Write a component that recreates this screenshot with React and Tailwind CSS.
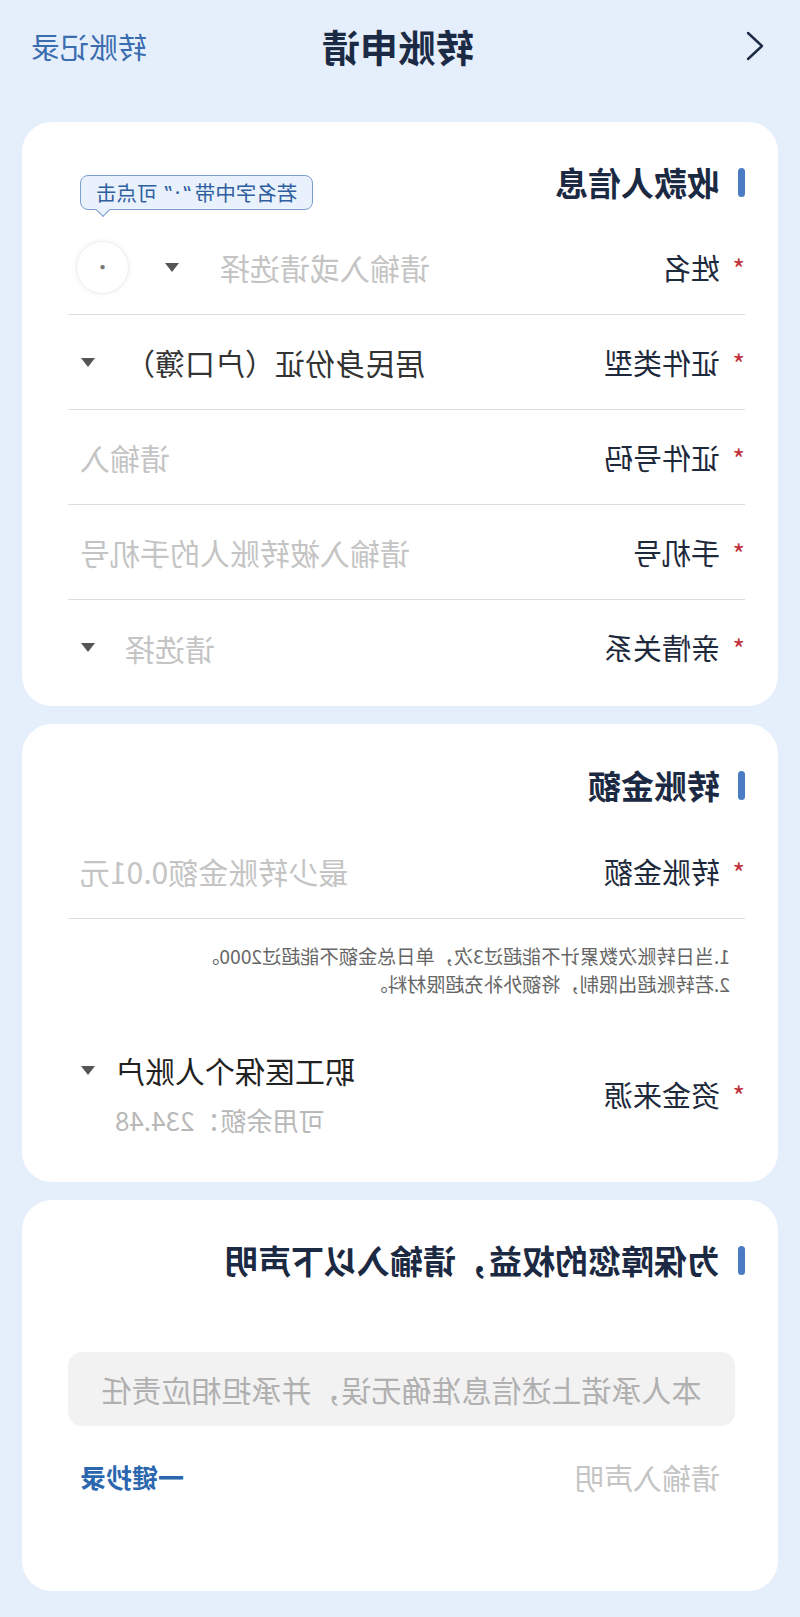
import React from 'react';

// The reference screenshot is horizontally mirrored, so the page is built
// normally and flipped as a whole with -scale-x-100.

function Caret() {
  return (
    <svg width="14" height="9" viewBox="0 0 14 9" className="block">
      <path d="M0 0h14L7 9z" fill="#555" />
    </svg>
  );
}

function SectionTitle({ children }) {
  return (
    <div className="flex h-[40px] items-center">
      <span className="h-[29px] w-[7px] rounded-full bg-[#4a7cc4]" />
      <h2 className="ml-[18px] text-[33px] font-bold leading-none text-[#1b2a42]">{children}</h2>
    </div>
  );
}

function Label({ children }) {
  return (
    <div className="flex items-start">
      <span className="mt-[2px] w-[25px] text-[27px] leading-none text-[#c0313a]">*</span>
      <span className="text-[29px] leading-none text-[#1e2a3b]">{children}</span>
    </div>
  );
}

function Row({ label, children, last }) {
  return (
    <div className={last ? 'flex h-[95px] items-center' : 'flex h-[95px] items-center border-b border-[#dedede]'}>
      <Label>{label}</Label>
      <div className="ml-auto flex items-center">{children}</div>
    </div>
  );
}

export default function App() {
  return (
    <div className="-scale-x-100 min-h-[1617px] bg-[#e5eefb] pb-[30px] font-['Noto_Sans_CJK_SC','Noto_Sans',sans-serif]">
      {/* Header */}
      <header className="grid h-[92px] grid-cols-[1fr_auto_1fr] items-center pl-[35px] pr-[31px]">
        <svg width="20" height="30" viewBox="0 0 20 30" className="block">
          <path d="M17 2L3 15l14 13" fill="none" stroke="#1c2b45" strokeWidth="2.4" strokeLinecap="round" strokeLinejoin="round" />
        </svg>
        <h1 className="text-[38px] font-bold leading-none text-[#1c2b45]">转账申请</h1>
        <span className="justify-self-end text-[29px] leading-none text-[#3a6cb0]">转账记录</span>
      </header>

      <div className="mt-[30px] flex flex-col gap-[18px]">
        {/* 收款人信息 */}
        <section className="mx-[22px] rounded-[30px] bg-white pb-[11px] pl-[33px] pr-[46px] pt-[40px]">
          <SectionTitle>收款人信息</SectionTitle>
          <div className="mt-[18px]">
            <Row label="姓名">
              <span className="text-[30px] leading-none text-[#c4c4c4]">请输入或请选择</span>
              <span className="ml-[41px]"><Caret /></span>
              <div className="relative ml-[36px] mr-[8px]">
                <div className="flex h-[53px] w-[53px] items-center justify-center rounded-full border border-[#eeeeee] bg-white text-[20px] text-[#777] shadow-[0_0_6px_rgba(0,0,0,0.06)]">·</div>
                <div className="absolute bottom-[84px] right-[4px] flex items-center whitespace-nowrap rounded-[8px] border-[1.5px] border-[#7c9fcf] bg-[#e9f1fc] px-[15px] py-[4px] text-[20.5px] leading-[25px] text-[#2f5fa0]">
                  若名字中带<span className="px-[4px] font-['Noto_Sans'] tracking-[3px]">“·”</span>可点击
                  <span className="absolute -bottom-[6px] right-[17px] h-[10px] w-[10px] rotate-45 border-b-[1.5px] border-r-[1.5px] border-[#7c9fcf] bg-[#e9f1fc]" />
                </div>
              </div>
            </Row>
            <Row label="证件类型">
              <span className="text-[30px] leading-none text-[#333]">居民身份证（户口簿）</span>
              <span className="ml-[30px] mr-[13px]"><Caret /></span>
            </Row>
            <Row label="证件号码">
              <span className="mr-[12px] text-[30px] leading-none text-[#c4c4c4]">请输入</span>
            </Row>
            <Row label="手机号">
              <span className="mr-[12px] text-[30px] leading-none text-[#c4c4c4]">请输入被转账人的手机号</span>
            </Row>
            <Row label="亲情关系" last>
              <span className="text-[30px] leading-none text-[#c4c4c4]">请选择</span>
              <span className="ml-[30px] mr-[13px]"><Caret /></span>
            </Row>
          </div>
        </section>

        {/* 转账金额 */}
        <section className="mx-[22px] rounded-[30px] bg-white pb-[44px] pl-[33px] pr-[46px] pt-[41px]">
          <SectionTitle>转账金额</SectionTitle>
          <div className="mt-[19px]">
            <Row label="转账金额">
              <span className="mr-[12px] text-[30px] leading-none text-[#c4c4c4]">最少转账金额0.01元</span>
            </Row>
          </div>
          <div className="pl-[15px] pt-[23px] text-[19.2px] leading-[28px] text-[#666]">
            <p>1.当日转账次数累计不能超过3次，单日总金额不能超过2000。</p>
            <p>2.若转账超出限制，将额外补充超限材料。</p>
          </div>
          <div className="mt-[52px] flex items-center">
            <Label>资金来源</Label>
            <div className="ml-auto flex items-start pr-[13px]">
              <div className="flex flex-col items-end">
                <span className="text-[30px] leading-[40px] text-[#222]">职工医保个人账户</span>
                <span className="mt-[12px] text-[26px] leading-[36px] text-[#b8b8b8]">可用余额：234.48</span>
              </div>
              <div className="ml-[20px] flex h-[40px] items-center"><Caret /></div>
            </div>
          </div>
        </section>

        {/* 声明 */}
        <section className="mx-[22px] rounded-[30px] bg-white pb-[94px] pl-[33px] pr-[46px] pt-[40px]">
          <SectionTitle>为保障您的权益，请输入以下声明</SectionTitle>
          <div className="ml-[10px] mt-[72px] flex h-[74px] items-center justify-center rounded-[14px] bg-[#f2f2f2] text-[30px] leading-none text-[#b0b0b0]">
            本人承诺上述信息准确无误，并承担相应责任
          </div>
          <div className="mt-[31px] flex h-[40px] items-center pl-[25px] pr-[12px]">
            <span className="text-[29px] leading-none text-[#c4c4c4]">请输入声明</span>
            <button className="ml-auto text-[26px] font-semibold leading-none text-[#2b67ae]">一键抄录</button>
          </div>
        </section>
      </div>
    </div>
  );
}
